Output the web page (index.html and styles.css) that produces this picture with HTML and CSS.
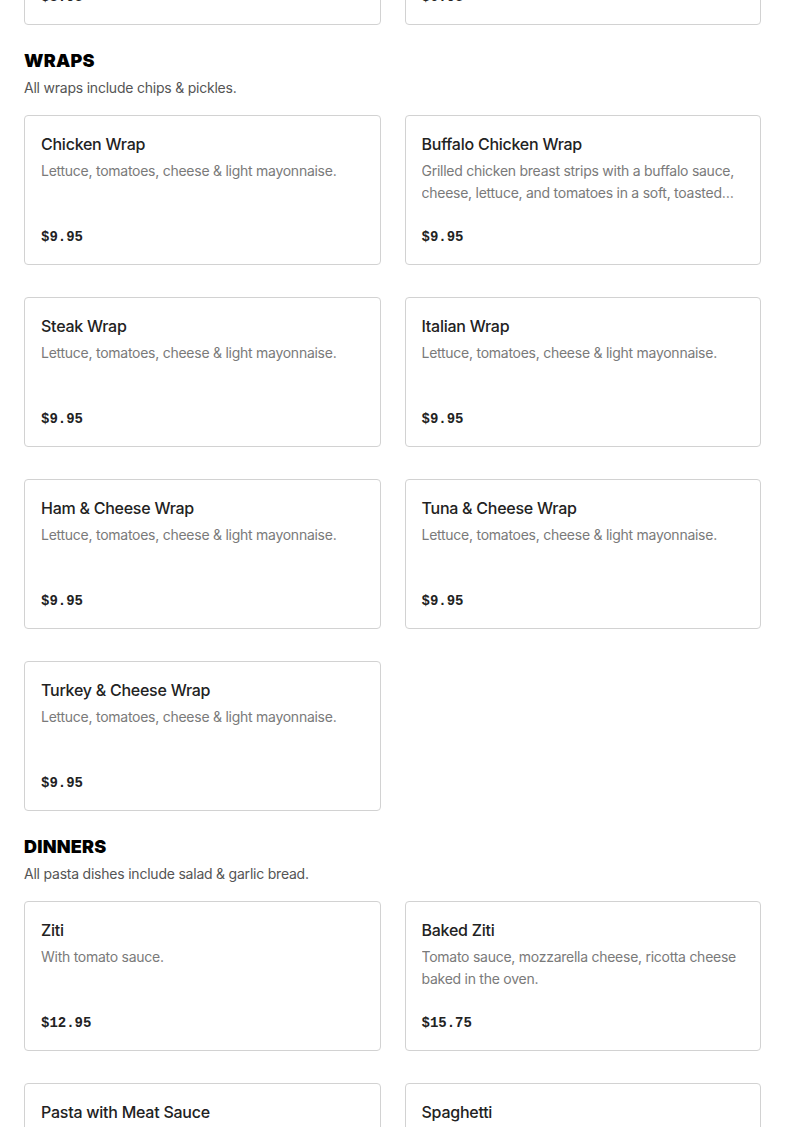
FILE: index.html
```html
<!DOCTYPE html>
<html lang="en">
<head>
<meta charset="utf-8">
<title>Menu</title>
<link rel="stylesheet" href="styles.css">
</head>
<body>
<main class="menu">
  <section class="section section-prev">
    <div class="grid">
      <div class="card">
        <h3 class="card-title">Turkey Club</h3>
        <p class="card-desc">Turkey, bacon, lettuce, tomatoes &amp; mayonnaise.</p>
        <p class="card-price">$8.95</p>
      </div>
      <div class="card">
        <h3 class="card-title">BLT</h3>
        <p class="card-desc">Bacon, lettuce, tomatoes &amp; mayonnaise.</p>
        <p class="card-price">$6.95</p>
      </div>
    </div>
  </section>

  <section class="section">
    <h2 class="section-title">WRAPS</h2>
    <p class="section-sub">All wraps include chips &amp; pickles.</p>
    <div class="grid">
      <div class="card">
        <h3 class="card-title">Chicken Wrap</h3>
        <p class="card-desc">Lettuce, tomatoes, cheese &amp; light mayonnaise.</p>
        <p class="card-price">$9.95</p>
      </div>
      <div class="card">
        <h3 class="card-title">Buffalo Chicken Wrap</h3>
        <p class="card-desc">Grilled chicken breast strips with a buffalo sauce, cheese, lettuce, and tomatoes in a soft, toasted flour tortilla.</p>
        <p class="card-price">$9.95</p>
      </div>
      <div class="card">
        <h3 class="card-title">Steak Wrap</h3>
        <p class="card-desc">Lettuce, tomatoes, cheese &amp; light mayonnaise.</p>
        <p class="card-price">$9.95</p>
      </div>
      <div class="card">
        <h3 class="card-title">Italian Wrap</h3>
        <p class="card-desc">Lettuce, tomatoes, cheese &amp; light mayonnaise.</p>
        <p class="card-price">$9.95</p>
      </div>
      <div class="card">
        <h3 class="card-title">Ham &amp; Cheese Wrap</h3>
        <p class="card-desc">Lettuce, tomatoes, cheese &amp; light mayonnaise.</p>
        <p class="card-price">$9.95</p>
      </div>
      <div class="card">
        <h3 class="card-title">Tuna &amp; Cheese Wrap</h3>
        <p class="card-desc">Lettuce, tomatoes, cheese &amp; light mayonnaise.</p>
        <p class="card-price">$9.95</p>
      </div>
      <div class="card">
        <h3 class="card-title">Turkey &amp; Cheese Wrap</h3>
        <p class="card-desc">Lettuce, tomatoes, cheese &amp; light mayonnaise.</p>
        <p class="card-price">$9.95</p>
      </div>
    </div>
  </section>

  <section class="section">
    <h2 class="section-title">DINNERS</h2>
    <p class="section-sub">All pasta dishes include salad &amp; garlic bread.</p>
    <div class="grid">
      <div class="card">
        <h3 class="card-title">Ziti</h3>
        <p class="card-desc">With tomato sauce.</p>
        <p class="card-price">$12.95</p>
      </div>
      <div class="card">
        <h3 class="card-title">Baked Ziti</h3>
        <p class="card-desc">Tomato sauce, mozzarella cheese, ricotta cheese baked in the oven.</p>
        <p class="card-price">$15.75</p>
      </div>
      <div class="card">
        <h3 class="card-title">Pasta with Meat Sauce</h3>
        <p class="card-desc">With homemade meat sauce.</p>
        <p class="card-price">$14.95</p>
      </div>
      <div class="card">
        <h3 class="card-title">Spaghetti</h3>
        <p class="card-desc">With tomato sauce.</p>
        <p class="card-price">$12.95</p>
      </div>
    </div>
  </section>
</main>
</body>
</html>
```

FILE: styles.css
```css
* {
  box-sizing: border-box;
}

html, body {
  margin: 0;
  padding: 0;
  background: #ffffff;
}

body {
  font-family: Inter, "Liberation Sans", Arial, sans-serif;
  color: #1f1f1f;
  overflow: hidden;
}

.menu {
  padding: 0 24px;
  margin-top: -125px;
}

.section {
  padding-top: 24px;
}

.section-prev {
  padding-top: 0;
}

.section-title {
  margin: 0;
  font-size: 18px;
  line-height: 24px;
  font-weight: 900;
  color: #000000;
  letter-spacing: 0.2px;
}

.section-sub {
  margin: 4px 0 16px;
  font-size: 14px;
  line-height: 22px;
  color: #555555;
  letter-spacing: -0.22px;
}

.grid {
  display: grid;
  grid-template-columns: 1fr 1fr;
  column-gap: 24px;
  row-gap: 32px;
}

.card {
  height: 150px;
  border: 1px solid #d2d2d2;
  border-radius: 4px;
  padding: 16px;
  display: flex;
  flex-direction: column;
  background: #ffffff;
}

.card-title {
  margin: 0;
  font-size: 16px;
  line-height: 24px;
  font-weight: 500;
  color: #222222;
  letter-spacing: -0.25px;
}

.card-desc {
  margin: 4px 0 0;
  font-size: 14px;
  line-height: 22px;
  color: #7a7a7a;
  letter-spacing: -0.26px;
  display: -webkit-box;
  -webkit-line-clamp: 2;
  -webkit-box-orient: vertical;
  overflow: hidden;
}

.card-price {
  margin: auto 0 0;
  font-family: "Liberation Mono", "DejaVu Sans Mono", monospace;
  font-weight: 700;
  font-size: 14px;
  line-height: 22px;
  color: #222222;
}
```
